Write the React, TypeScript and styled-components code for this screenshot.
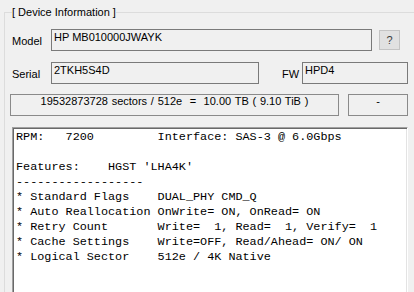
import React from 'react';
import styled, { createGlobalStyle } from 'styled-components';

const GlobalStyle = createGlobalStyle`
  html, body { margin: 0; padding: 0; background: #f0f0f0; overflow: hidden; }
  body { font-family: "Liberation Sans", Arial, sans-serif; font-size: 11px; color: #000; }
`;

const Page = styled.div`
  width: 414px;
  height: 292px;
  overflow: hidden;
  box-sizing: border-box;
  padding: 6px 0 0 4px;
`;

const Group = styled.fieldset`
  margin: 0;
  padding: 10px 0 0 5px;
  border: 1px solid #dcdcdc;
  width: 460px;
  min-width: 0;
  height: 400px;
  box-sizing: border-box;
  display: flex;
  flex-direction: column;
`;

const Legend = styled.legend`
  margin-left: 2px;
  padding: 0;
  font-size: 11px;
  line-height: 13px;
`;

const Row = styled.div<{ $mt?: number }>`
  display: flex;
  align-items: center;
  height: 22px;
  margin-top: ${p => p.$mt ?? 0}px;
`;

const Label = styled.span<{ $w: number; $ml?: number }>`
  box-sizing: border-box;
  width: ${p => p.$w}px;
  margin-left: ${p => p.$ml ?? 0}px;
  padding-top: 2px;
  white-space: nowrap;
  line-height: 13px;
`;

const Field = styled.div<{ $w: number }>`
  box-sizing: border-box;
  width: ${p => p.$w}px;
  height: 22px;
  border: 1px solid #7a7a7a;
  background: #f0f0f0;
  padding: 1px 2px 0;
  line-height: 13px;
  white-space: nowrap;
  overflow: hidden;
`;

const Readout = styled.div<{ $w: number; $ml?: number }>`
  box-sizing: border-box;
  width: ${p => p.$w}px;
  margin-left: ${p => p.$ml ?? 0}px;
  height: 22px;
  border: 1px solid #8a8a8a;
  background: #f0f0f0;
  padding: 0 2px;
  line-height: 13px;
  text-align: center;
  word-spacing: 0.7px;
  white-space: nowrap;
  overflow: hidden;
`;

const HelpButton = styled.button`
  box-sizing: border-box;
  width: 21px;
  height: 20px;
  margin: 0 0 0 7px;
  padding: 0;
  border: 1px solid #c4c4c4;
  background: #e1e1e1;
  color: #3c3c3c;
  font-family: "Liberation Sans", Arial, sans-serif;
  font-size: 11px;
  line-height: 18px;
`;

const Console = styled.pre`
  margin: 11px 0 0 2px;
  width: 396px;
  height: 220px;
  box-sizing: border-box;
  background: #fff;
  border-style: solid;
  border-width: 1px;
  border-color: #a0a0a0 #ffffff #ffffff #a0a0a0;
  box-shadow: inset 1px 1px 0 #696969, inset -1px -1px 0 #e3e3e3;
  padding: 2px 0 0 3px;
  font-family: "Liberation Mono", "Courier New", monospace;
  font-size: 11.8px;
  line-height: 15px;
  color: #000;
  overflow: hidden;
`;

const consoleText = [
  "RPM:   7200         Interface: SAS-3 @ 6.0Gbps",
  "",
  "Features:    HGST 'LHA4K'",
  "------------------",
  "* Standard Flags    DUAL_PHY CMD_Q",
  "* Auto Reallocation OnWrite= ON, OnRead= ON",
  "* Retry Count       Write=  1, Read=  1, Verify=  1",
  "* Cache Settings    Write=OFF, Read/Ahead= ON/ ON",
  "* Logical Sector    512e / 4K Native",
].join('\n');

export default function App() {
  return (
    <>
      <GlobalStyle />
      <Page>
        <Group>
          <Legend>[ Device Information ]</Legend>
          <Row>
            <Label $w={39} $ml={2}>Model</Label>
            <Field $w={321}>HP MB010000JWAYK</Field>
            <HelpButton>?</HelpButton>
          </Row>
          <Row $mt={11}>
            <Label $w={39} $ml={2}>Serial</Label>
            <Field $w={208}>2TKH5S4D</Field>
            <Label $w={20} $ml={23}>FW</Label>
            <Field $w={106}>HPD4</Field>
          </Row>
          <Row $mt={10}>
            <Readout $w={329}>19532873728 sectors / 512e&nbsp; =&nbsp; 10.00 TB ( 9.10 TiB )</Readout>
            <Readout $w={60} $ml={9}>-</Readout>
          </Row>
          <Console>{consoleText}</Console>
        </Group>
      </Page>
    </>
  );
}
